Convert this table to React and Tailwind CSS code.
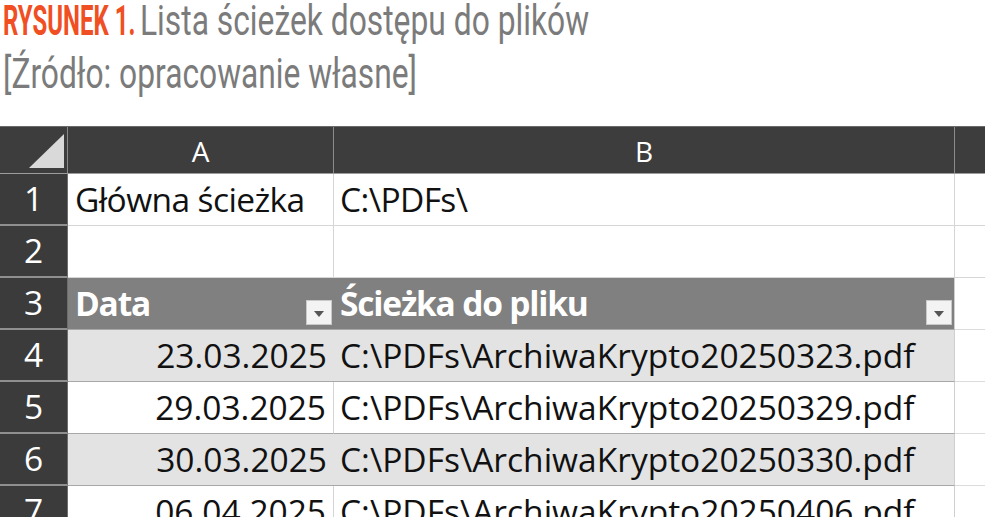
import React from "react";

const Dropdown = () => (
  <div className="mb-[4px] mr-[2px] flex h-[25px] w-[26px] shrink-0 items-end justify-center self-end border border-[#c9c9c9] bg-[#f3f3f3] pb-[7px]">
    <svg width="10" height="6" viewBox="0 0 10 6">
      <polygon points="0,0 10,0 5,6" fill="#555555" />
    </svg>
  </div>
);

const RowNum = ({ n }) => (
  <div className="flex h-full w-[68px] shrink-0 items-center justify-center border-b-2 border-r border-b-[#8f8f8f] border-r-[#6e6e6e] bg-[#3b3b3b] text-[33.5px] text-white">
    {n}
  </div>
);

const DataRow = ({ n, date, path, band }) => (
  <div className="flex h-[52px]">
    <RowNum n={n} />
    <div
      className={
        "flex w-[266px] shrink-0 items-center justify-end border-b border-[#a8a8a8] pr-[7px] " +
        (band ? "bg-[#e3e3e3]" : "border-r border-r-[#d4d4d4] bg-white")
      }
    >
      {date}
    </div>
    <div
      className={
        "flex w-[621px] shrink-0 items-center border-b border-r border-b-[#a8a8a8] border-r-[#cfcfcf] pl-[6px] " +
        (band ? "bg-[#e3e3e3]" : "bg-white")
      }
    >
      {path}
    </div>
    <div className="flex-1 border-b border-[#dcdcdc] bg-white" />
  </div>
);

export default function App() {
  return (
    <div className="h-[517px] w-[985px] overflow-hidden bg-white">
      <div className="h-[126px] pl-[3px] font-['Roboto',sans-serif]">
        <div className="flex h-[48px] items-start whitespace-nowrap text-[43px] leading-[40px]">
          <span className="inline-block w-[137px] overflow-visible">
            <span className="inline-block origin-left scale-x-[0.558] font-bold text-[#f04e23]">
              RYSUNEK 1.
            </span>
          </span>
          <span className="inline-block origin-left scale-x-[0.739] text-[#7b7b7b]">
            Lista ścieżek dostępu do plików
          </span>
        </div>
        <div className="whitespace-nowrap text-[43px] leading-[50px] text-[#7b7b7b]">
          <span className="inline-block origin-left scale-x-[0.738]">
            [Źródło: opracowanie własne]
          </span>
        </div>
      </div>

      <div className="font-['Open_Sans',sans-serif] text-[33.5px] leading-none text-[#111111]">
        {/* column header */}
        <div className="flex h-[48px] border-b border-t border-b-[#9c9c9c] border-t-[#6a6a6a] bg-[#3d3d3d] text-[28px] text-white">
          <div className="relative w-[68px] shrink-0 border-r border-[#8a8a8a]">
            <svg className="absolute left-0 top-0" width="68" height="46" viewBox="0 0 68 46">
              <polygon points="64,7 64,41 29,41" fill="#d9d9d9" />
            </svg>
          </div>
          <div className="flex w-[266px] shrink-0 items-center justify-center border-r border-[#8a8a8a] pt-[2px]">
            A
          </div>
          <div className="flex w-[621px] shrink-0 items-center justify-center border-r border-[#8a8a8a] pt-[2px]">
            B
          </div>
          <div className="flex-1" />
        </div>

        {/* row 1 */}
        <div className="flex h-[52px]">
          <RowNum n={1} />
          <div className="flex w-[266px] shrink-0 items-center border-b border-r border-[#d6d6d6] pl-[7px] tracking-[-0.6px]">
            Główna ścieżka
          </div>
          <div className="flex w-[621px] shrink-0 items-center border-b border-r border-[#d6d6d6] pl-[6px] tracking-[-0.6px]">
            C:\PDFs\
          </div>
          <div className="flex-1 border-b border-[#d6d6d6]" />
        </div>

        {/* row 2 */}
        <div className="flex h-[52px]">
          <RowNum n={2} />
          <div className="w-[266px] shrink-0 border-b border-r border-[#d6d6d6]" />
          <div className="w-[621px] shrink-0 border-b border-r border-[#d6d6d6]" />
          <div className="flex-1 border-b border-[#d6d6d6]" />
        </div>

        {/* row 3 - table header */}
        <div className="flex h-[52px]">
          <RowNum n={3} />
          <div className="flex w-[266px] shrink-0 items-center justify-between border-b border-[#a8a8a8] bg-[#808080] pl-[7px] font-bold tracking-[-1.2px] text-white">
            <span>Data</span>
            <Dropdown />
          </div>
          <div className="flex w-[621px] shrink-0 items-center justify-between border-b border-r border-b-[#a8a8a8] border-r-[#cfcfcf] bg-[#808080] pl-[6px] font-bold tracking-[-1.2px] text-white">
            <span>Ścieżka do pliku</span>
            <Dropdown />
          </div>
          <div className="flex-1 border-b border-[#dcdcdc] bg-white" />
        </div>

        <DataRow n={4} date="23.03.2025" path="C:\PDFs\ArchiwaKrypto20250323.pdf" band />
        <DataRow n={5} date="29.03.2025" path="C:\PDFs\ArchiwaKrypto20250329.pdf" />
        <DataRow n={6} date="30.03.2025" path="C:\PDFs\ArchiwaKrypto20250330.pdf" band />
        <DataRow n={7} date="06.04.2025" path="C:\PDFs\ArchiwaKrypto20250406.pdf" />
      </div>
    </div>
  );
}
